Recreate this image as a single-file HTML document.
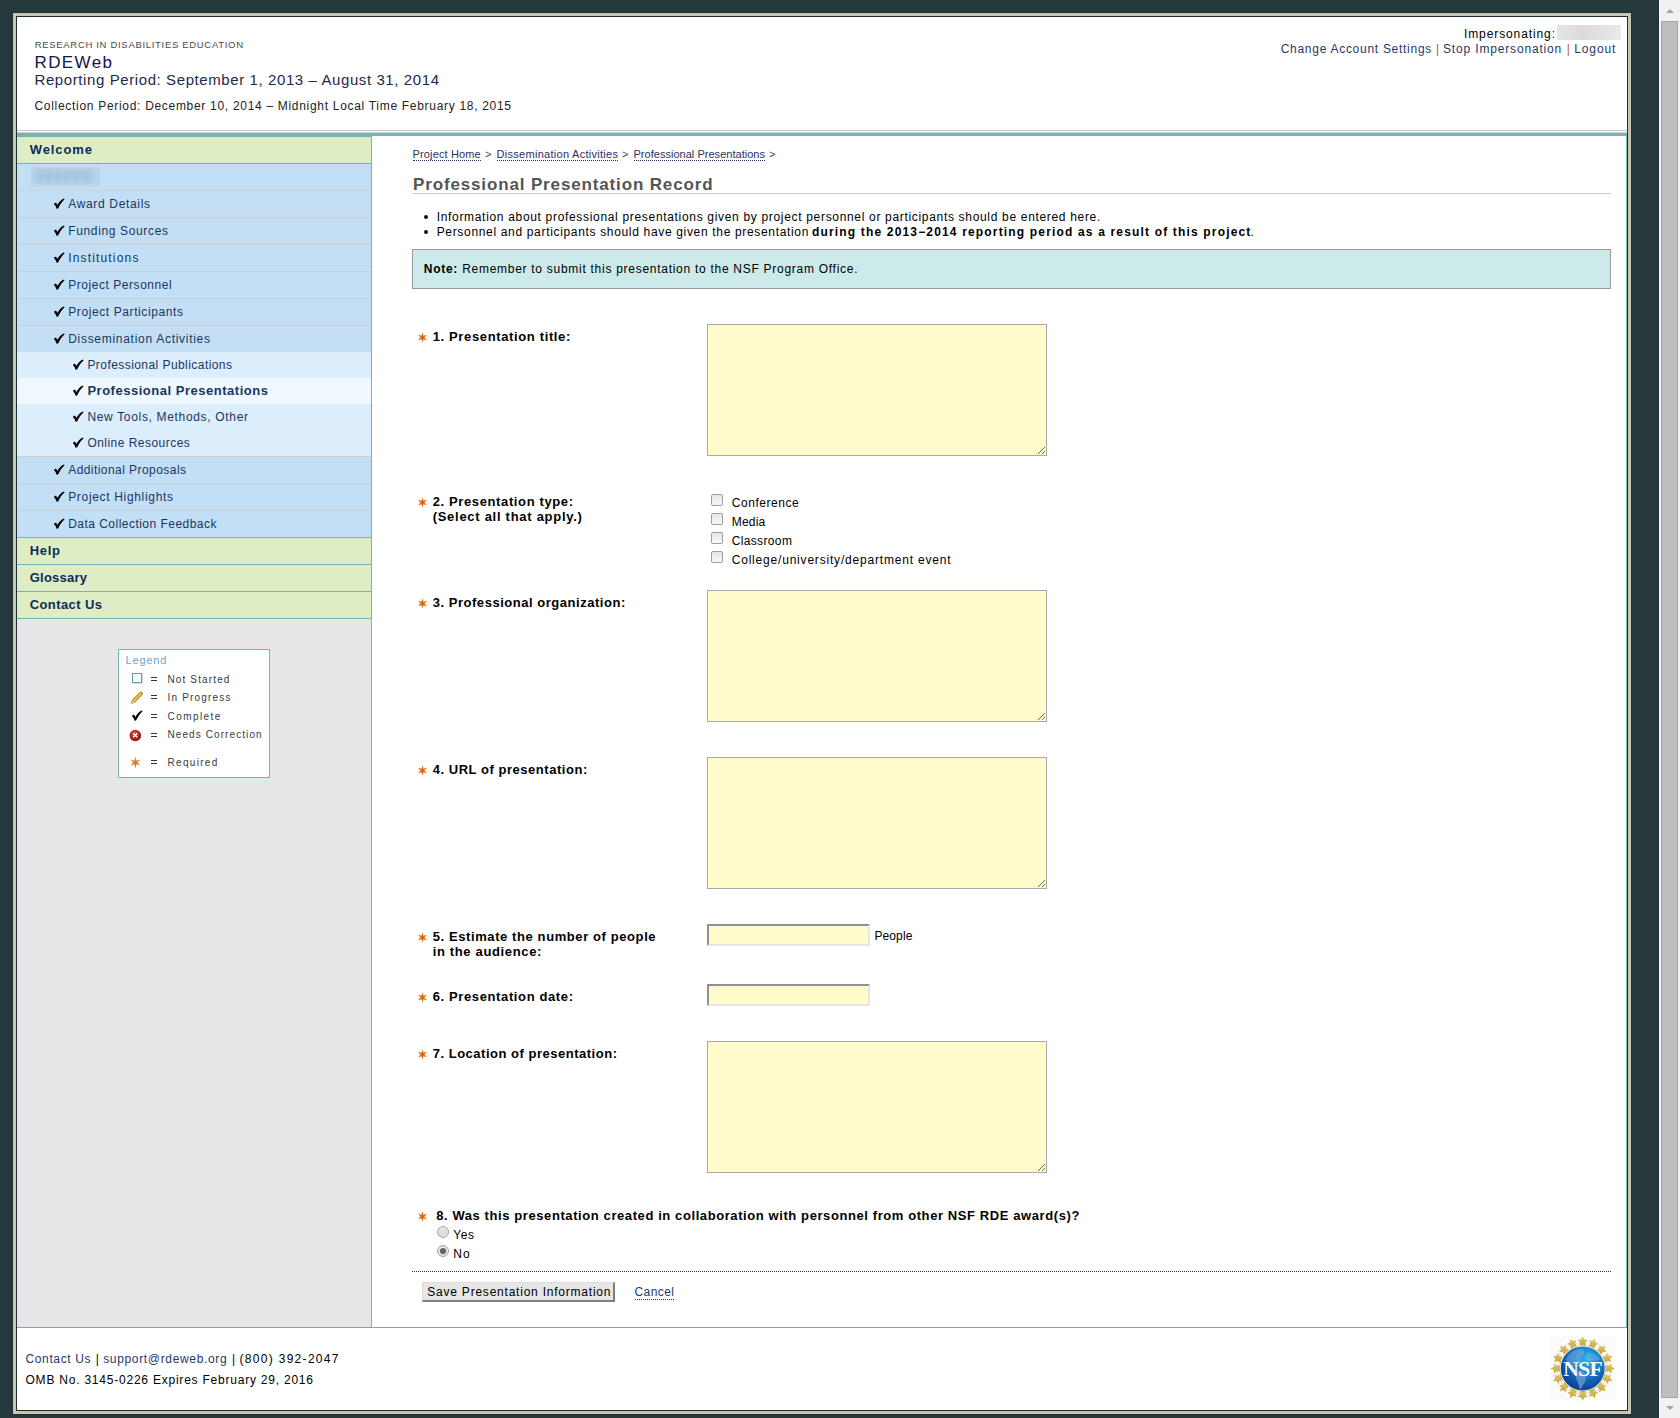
<!DOCTYPE html>
<html><head><meta charset="utf-8"><title>RDEWeb - Professional Presentation Record</title>
<style>
html,body{margin:0;padding:0}
body{width:1680px;height:1418px;overflow:hidden;position:relative;background:#25393d;font-family:"Liberation Sans",sans-serif}
.a{position:absolute}
.tx{position:absolute;white-space:nowrap;font-family:"Liberation Sans",sans-serif}
.tx b{font-weight:700}
.sep{color:#b4601e}
.bl{border-bottom:1px dotted #2e2e5e;}
#frame{position:absolute;left:13px;top:13px;width:1612px;height:1395px;border:3px solid #c8c5b0;box-shadow:0 0 0 1px #1f3235}
#inner{position:absolute;left:0;top:0;width:1610px;height:1393px;border:1px solid #1c2e32;background:#fff}
.row{position:absolute;left:17px;width:354px;height:26px}
.hb{background:#dfedc4}
.bb{background:#c2dff5}
.sb{background:#dcedfc}
.ab{background:#eef8fe}
.gl{position:absolute;left:17px;width:354px;height:1px;background:#cfcfcf}
.tl{position:absolute;left:17px;width:354px;height:1px;background:#78b3b4}
.ta{position:absolute;left:707px;width:338px;height:130px;border:1px solid #a9a9a9;background:#fffbcb}
.grip{position:absolute;right:1px;bottom:1px;width:9px;height:9px}
.inp{position:absolute;left:707px;width:159px;height:18px;border-style:solid;border-width:2px 2px 2px 2px;border-color:#909090 #e6e6e8 #e6e6e8 #909090;background:#fffbcb}
.cb{position:absolute;left:711px;width:10px;height:10px;border:1px solid #9d9d9d;border-radius:2px;background:linear-gradient(#e7e7e7,#f7f7f7)}
.rd{position:absolute;left:437px;width:10px;height:10px;border:1px solid #a5a5a5;border-radius:50%;background:linear-gradient(#e6e6e6,#dcdcdc)}
.star{position:absolute;left:417px;width:11px;height:11px}
.chk{position:absolute;width:11px;height:11px}
</style></head>
<body>
<!-- scrollbar -->
<div class="a" style="left:1658px;top:0;width:1px;height:1418px;background:#1b2b2f"></div>
<div class="a" style="left:1659px;top:0;width:21px;height:1418px;background:#f1f1f1;border-left:1px solid #fff;box-sizing:border-box"></div>
<div class="a" style="left:1661px;top:21px;width:15px;height:1375px;background:#bebebe;border:1px solid #a5a5a5"></div>
<svg class="a" style="left:1663.5px;top:7px" width="12" height="8"><path d="M2,6 L6,2 L10,6 Z" fill="#a3a3a3"/></svg>
<svg class="a" style="left:1664px;top:1404px" width="12" height="8"><path d="M2,2 L6,6 L10,2 Z" fill="#a3a3a3"/></svg>

<div id="frame"><div id="inner"></div></div>

<!-- header bottom lines -->
<div class="a" style="left:17px;top:130px;width:1610px;height:1px;background:#c9c9c9"></div>
<div class="a" style="left:17px;top:132px;width:1610px;height:1px;background:#d5d1d1"></div>
<div class="a" style="left:17px;top:133px;width:1610px;height:3px;background:#78b2b3"></div>
<!-- impersonating blur -->
<div class="a" style="left:1557px;top:25px;width:64px;height:15px;background:linear-gradient(90deg,#e6e4e4,#dcdada 40%,#e2e0e0 70%,#ebebeb);filter:blur(0.6px)"></div>

<!-- sidebar -->
<div class="a" style="left:17px;top:136px;width:354px;height:1191px;background:#e6e6e6"></div>
<div class="a" style="left:371px;top:136px;width:1px;height:1191px;background:#78b3b4"></div>
<div class="tl" style="top:136px"></div>
<div class="row hb" style="top:137px"></div>
<div class="tl" style="top:163px"></div>
<div class="row bb" style="top:164px"></div>
<div class="gl" style="top:190px"></div>
<div class="row bb" style="top:191px"></div>
<div class="gl" style="top:217px"></div>
<div class="row bb" style="top:218px"></div>
<div class="gl" style="top:244px"></div>
<div class="row bb" style="top:245px"></div>
<div class="gl" style="top:271px"></div>
<div class="row bb" style="top:272px"></div>
<div class="gl" style="top:298px"></div>
<div class="row bb" style="top:299px"></div>
<div class="gl" style="top:325px"></div>
<div class="row bb" style="top:326px"></div>
<div class="row sb" style="top:352px"></div>
<div class="row ab" style="top:378px"></div>
<div class="row sb" style="top:404px"></div>
<div class="row sb" style="top:430px"></div>
<div class="gl" style="top:456px"></div>
<div class="row bb" style="top:457px"></div>
<div class="gl" style="top:483px"></div>
<div class="row bb" style="top:484px"></div>
<div class="gl" style="top:510px"></div>
<div class="row bb" style="top:511px"></div>
<div class="tl" style="top:537px"></div>
<div class="row hb" style="top:538px"></div>
<div class="tl" style="top:564px"></div>
<div class="row hb" style="top:565px"></div>
<div class="tl" style="top:591px"></div>
<div class="row hb" style="top:592px"></div>
<div class="tl" style="top:618px"></div>
<!-- blurred project name -->
<div class="a" style="left:31px;top:167px;width:69px;height:19px;background:#b6d2ea;filter:blur(1px)"></div><div class="a" style="left:37px;top:170px;width:55px;height:12px;background:repeating-linear-gradient(90deg,#a8c6e0 0,#a8c6e0 6px,#aecbe4 6px,#aecbe4 9px);filter:blur(1.6px)"></div>
<svg class="a" style="left:53px;top:197.5px" width="12" height="11" viewBox="0 0 12 11"><path d="M0.9,6.1 C1.5,5.1 2.5,4.6 3.2,4.8 L4.3,6.9 C6.0,4.2 8.2,1.5 10.9,0.5 C11.5,0.6 11.6,1.4 11.2,1.8 C8.8,3.8 6.8,7.0 5.1,10.6 L3.6,10.8 C3.0,9.0 2.0,7.2 0.9,6.1 Z" fill="#000"/></svg>
<svg class="a" style="left:53px;top:224.5px" width="12" height="11" viewBox="0 0 12 11"><path d="M0.9,6.1 C1.5,5.1 2.5,4.6 3.2,4.8 L4.3,6.9 C6.0,4.2 8.2,1.5 10.9,0.5 C11.5,0.6 11.6,1.4 11.2,1.8 C8.8,3.8 6.8,7.0 5.1,10.6 L3.6,10.8 C3.0,9.0 2.0,7.2 0.9,6.1 Z" fill="#000"/></svg>
<svg class="a" style="left:53px;top:251.5px" width="12" height="11" viewBox="0 0 12 11"><path d="M0.9,6.1 C1.5,5.1 2.5,4.6 3.2,4.8 L4.3,6.9 C6.0,4.2 8.2,1.5 10.9,0.5 C11.5,0.6 11.6,1.4 11.2,1.8 C8.8,3.8 6.8,7.0 5.1,10.6 L3.6,10.8 C3.0,9.0 2.0,7.2 0.9,6.1 Z" fill="#000"/></svg>
<svg class="a" style="left:53px;top:278.5px" width="12" height="11" viewBox="0 0 12 11"><path d="M0.9,6.1 C1.5,5.1 2.5,4.6 3.2,4.8 L4.3,6.9 C6.0,4.2 8.2,1.5 10.9,0.5 C11.5,0.6 11.6,1.4 11.2,1.8 C8.8,3.8 6.8,7.0 5.1,10.6 L3.6,10.8 C3.0,9.0 2.0,7.2 0.9,6.1 Z" fill="#000"/></svg>
<svg class="a" style="left:53px;top:305.5px" width="12" height="11" viewBox="0 0 12 11"><path d="M0.9,6.1 C1.5,5.1 2.5,4.6 3.2,4.8 L4.3,6.9 C6.0,4.2 8.2,1.5 10.9,0.5 C11.5,0.6 11.6,1.4 11.2,1.8 C8.8,3.8 6.8,7.0 5.1,10.6 L3.6,10.8 C3.0,9.0 2.0,7.2 0.9,6.1 Z" fill="#000"/></svg>
<svg class="a" style="left:53px;top:332.5px" width="12" height="11" viewBox="0 0 12 11"><path d="M0.9,6.1 C1.5,5.1 2.5,4.6 3.2,4.8 L4.3,6.9 C6.0,4.2 8.2,1.5 10.9,0.5 C11.5,0.6 11.6,1.4 11.2,1.8 C8.8,3.8 6.8,7.0 5.1,10.6 L3.6,10.8 C3.0,9.0 2.0,7.2 0.9,6.1 Z" fill="#000"/></svg>
<svg class="a" style="left:53px;top:463.5px" width="12" height="11" viewBox="0 0 12 11"><path d="M0.9,6.1 C1.5,5.1 2.5,4.6 3.2,4.8 L4.3,6.9 C6.0,4.2 8.2,1.5 10.9,0.5 C11.5,0.6 11.6,1.4 11.2,1.8 C8.8,3.8 6.8,7.0 5.1,10.6 L3.6,10.8 C3.0,9.0 2.0,7.2 0.9,6.1 Z" fill="#000"/></svg>
<svg class="a" style="left:53px;top:490.5px" width="12" height="11" viewBox="0 0 12 11"><path d="M0.9,6.1 C1.5,5.1 2.5,4.6 3.2,4.8 L4.3,6.9 C6.0,4.2 8.2,1.5 10.9,0.5 C11.5,0.6 11.6,1.4 11.2,1.8 C8.8,3.8 6.8,7.0 5.1,10.6 L3.6,10.8 C3.0,9.0 2.0,7.2 0.9,6.1 Z" fill="#000"/></svg>
<svg class="a" style="left:53px;top:517.5px" width="12" height="11" viewBox="0 0 12 11"><path d="M0.9,6.1 C1.5,5.1 2.5,4.6 3.2,4.8 L4.3,6.9 C6.0,4.2 8.2,1.5 10.9,0.5 C11.5,0.6 11.6,1.4 11.2,1.8 C8.8,3.8 6.8,7.0 5.1,10.6 L3.6,10.8 C3.0,9.0 2.0,7.2 0.9,6.1 Z" fill="#000"/></svg>
<svg class="a" style="left:72px;top:358.5px" width="12" height="11" viewBox="0 0 12 11"><path d="M0.9,6.1 C1.5,5.1 2.5,4.6 3.2,4.8 L4.3,6.9 C6.0,4.2 8.2,1.5 10.9,0.5 C11.5,0.6 11.6,1.4 11.2,1.8 C8.8,3.8 6.8,7.0 5.1,10.6 L3.6,10.8 C3.0,9.0 2.0,7.2 0.9,6.1 Z" fill="#000"/></svg>
<svg class="a" style="left:72px;top:384.5px" width="12" height="11" viewBox="0 0 12 11"><path d="M0.9,6.1 C1.5,5.1 2.5,4.6 3.2,4.8 L4.3,6.9 C6.0,4.2 8.2,1.5 10.9,0.5 C11.5,0.6 11.6,1.4 11.2,1.8 C8.8,3.8 6.8,7.0 5.1,10.6 L3.6,10.8 C3.0,9.0 2.0,7.2 0.9,6.1 Z" fill="#000"/></svg>
<svg class="a" style="left:72px;top:410.5px" width="12" height="11" viewBox="0 0 12 11"><path d="M0.9,6.1 C1.5,5.1 2.5,4.6 3.2,4.8 L4.3,6.9 C6.0,4.2 8.2,1.5 10.9,0.5 C11.5,0.6 11.6,1.4 11.2,1.8 C8.8,3.8 6.8,7.0 5.1,10.6 L3.6,10.8 C3.0,9.0 2.0,7.2 0.9,6.1 Z" fill="#000"/></svg>
<svg class="a" style="left:72px;top:436.5px" width="12" height="11" viewBox="0 0 12 11"><path d="M0.9,6.1 C1.5,5.1 2.5,4.6 3.2,4.8 L4.3,6.9 C6.0,4.2 8.2,1.5 10.9,0.5 C11.5,0.6 11.6,1.4 11.2,1.8 C8.8,3.8 6.8,7.0 5.1,10.6 L3.6,10.8 C3.0,9.0 2.0,7.2 0.9,6.1 Z" fill="#000"/></svg>

<!-- legend -->
<div class="a" style="left:118px;top:649px;width:150px;height:127px;border:1px solid #7ab3b5;background:#fff"></div>
<div class="a" style="left:132px;top:673px;width:8px;height:8px;border:1px solid #5a9fb5;background:#fff;box-shadow:1px 1px 0 #d8d8d8"></div>
<svg class="a" style="left:129px;top:690px" width="15" height="15"><path d="M2.5,13.2 L3.4,10.2 L11.2,2.2 L13.3,4.3 L5.5,12.3 Z" fill="#f2c232" stroke="#8a5a10" stroke-width="0.9"/><path d="M11.2,2.2 L12.2,1.2 L14.2,3.2 L13.3,4.3 Z" fill="#e08a40"/><path d="M2.5,13.2 L3.4,10.2 L5.5,12.3 Z" fill="#e8d0a0"/></svg>
<svg class="a" style="left:131px;top:710px" width="12" height="11" viewBox="0 0 12 11"><path d="M0.9,6.1 C1.5,5.1 2.5,4.6 3.2,4.8 L4.3,6.9 C6.0,4.2 8.2,1.5 10.9,0.5 C11.5,0.6 11.6,1.4 11.2,1.8 C8.8,3.8 6.8,7.0 5.1,10.6 L3.6,10.8 C3.0,9.0 2.0,7.2 0.9,6.1 Z" fill="#000"/></svg>
<svg class="a" style="left:129px;top:729px" width="13" height="13"><defs><radialGradient id="rg" cx="0.4" cy="0.3" r="0.8"><stop offset="0" stop-color="#e04040"/><stop offset="1" stop-color="#8a0a0a"/></radialGradient></defs><circle cx="6.3" cy="6.5" r="5.8" fill="url(#rg)"/><path d="M4.2,4.3 L8.3,8.3 M8.3,4.3 L4.2,8.3" stroke="#fff" stroke-width="1.5"/></svg>
<svg class="a" style="left:130.0px;top:756.7px" width="11" height="11"><polygon points="5.50,-0.50 6.50,3.77 10.70,2.50 7.50,5.50 10.70,8.50 6.50,7.23 5.50,11.50 4.50,7.23 0.30,8.50 3.50,5.50 0.30,2.50 4.50,3.77" fill="#e07a22"/></svg>
<div class="a" style="left:151px;top:676.5px;width:6px;height:1px;background:#333"></div>
<div class="a" style="left:151px;top:679.5px;width:6px;height:1px;background:#333"></div>
<div class="a" style="left:151px;top:695.0px;width:6px;height:1px;background:#333"></div>
<div class="a" style="left:151px;top:698.0px;width:6px;height:1px;background:#333"></div>
<div class="a" style="left:151px;top:714.0px;width:6px;height:1px;background:#333"></div>
<div class="a" style="left:151px;top:717.0px;width:6px;height:1px;background:#333"></div>
<div class="a" style="left:151px;top:732.5px;width:6px;height:1px;background:#333"></div>
<div class="a" style="left:151px;top:735.5px;width:6px;height:1px;background:#333"></div>
<div class="a" style="left:151px;top:760.0px;width:6px;height:1px;background:#333"></div>
<div class="a" style="left:151px;top:763.0px;width:6px;height:1px;background:#333"></div>

<!-- content -->
<div class="a" style="left:1626px;top:136px;width:1px;height:1191px;background:#78b3b4"></div>
<div class="a" style="left:412px;top:193px;width:1199px;height:1px;background:#cccccc"></div>
<div class="a" style="left:424px;top:215px;width:4px;height:4px;border-radius:50%;background:#111"></div>
<div class="a" style="left:424px;top:230px;width:4px;height:4px;border-radius:50%;background:#111"></div>
<div class="a" style="left:412px;top:249px;width:1197px;height:38px;border:1px solid #9a9a9a;background:#cdeaea"></div>

<div class="ta" style="top:324px"></div>
<div class="ta" style="top:590px"></div>
<div class="ta" style="top:757px"></div>
<div class="ta" style="top:1041px"></div>
<div class="a" style="left:1038px;top:453px;width:1px;height:1px;background:#6a6a60"></div><div class="a" style="left:1039px;top:452px;width:1px;height:1px;background:#6a6a60"></div><div class="a" style="left:1040px;top:451px;width:1px;height:1px;background:#6a6a60"></div><div class="a" style="left:1041px;top:450px;width:1px;height:1px;background:#6a6a60"></div><div class="a" style="left:1042px;top:449px;width:1px;height:1px;background:#6a6a60"></div><div class="a" style="left:1043px;top:448px;width:1px;height:1px;background:#6a6a60"></div><div class="a" style="left:1044px;top:447px;width:1px;height:1px;background:#6a6a60"></div><div class="a" style="left:1042px;top:453px;width:1px;height:1px;background:#6a6a60"></div><div class="a" style="left:1043px;top:452px;width:1px;height:1px;background:#6a6a60"></div><div class="a" style="left:1044px;top:451px;width:1px;height:1px;background:#6a6a60"></div>
<div class="a" style="left:1038px;top:719px;width:1px;height:1px;background:#6a6a60"></div><div class="a" style="left:1039px;top:718px;width:1px;height:1px;background:#6a6a60"></div><div class="a" style="left:1040px;top:717px;width:1px;height:1px;background:#6a6a60"></div><div class="a" style="left:1041px;top:716px;width:1px;height:1px;background:#6a6a60"></div><div class="a" style="left:1042px;top:715px;width:1px;height:1px;background:#6a6a60"></div><div class="a" style="left:1043px;top:714px;width:1px;height:1px;background:#6a6a60"></div><div class="a" style="left:1044px;top:713px;width:1px;height:1px;background:#6a6a60"></div><div class="a" style="left:1042px;top:719px;width:1px;height:1px;background:#6a6a60"></div><div class="a" style="left:1043px;top:718px;width:1px;height:1px;background:#6a6a60"></div><div class="a" style="left:1044px;top:717px;width:1px;height:1px;background:#6a6a60"></div>
<div class="a" style="left:1038px;top:886px;width:1px;height:1px;background:#6a6a60"></div><div class="a" style="left:1039px;top:885px;width:1px;height:1px;background:#6a6a60"></div><div class="a" style="left:1040px;top:884px;width:1px;height:1px;background:#6a6a60"></div><div class="a" style="left:1041px;top:883px;width:1px;height:1px;background:#6a6a60"></div><div class="a" style="left:1042px;top:882px;width:1px;height:1px;background:#6a6a60"></div><div class="a" style="left:1043px;top:881px;width:1px;height:1px;background:#6a6a60"></div><div class="a" style="left:1044px;top:880px;width:1px;height:1px;background:#6a6a60"></div><div class="a" style="left:1042px;top:886px;width:1px;height:1px;background:#6a6a60"></div><div class="a" style="left:1043px;top:885px;width:1px;height:1px;background:#6a6a60"></div><div class="a" style="left:1044px;top:884px;width:1px;height:1px;background:#6a6a60"></div>
<div class="a" style="left:1038px;top:1170px;width:1px;height:1px;background:#6a6a60"></div><div class="a" style="left:1039px;top:1169px;width:1px;height:1px;background:#6a6a60"></div><div class="a" style="left:1040px;top:1168px;width:1px;height:1px;background:#6a6a60"></div><div class="a" style="left:1041px;top:1167px;width:1px;height:1px;background:#6a6a60"></div><div class="a" style="left:1042px;top:1166px;width:1px;height:1px;background:#6a6a60"></div><div class="a" style="left:1043px;top:1165px;width:1px;height:1px;background:#6a6a60"></div><div class="a" style="left:1044px;top:1164px;width:1px;height:1px;background:#6a6a60"></div><div class="a" style="left:1042px;top:1170px;width:1px;height:1px;background:#6a6a60"></div><div class="a" style="left:1043px;top:1169px;width:1px;height:1px;background:#6a6a60"></div><div class="a" style="left:1044px;top:1168px;width:1px;height:1px;background:#6a6a60"></div>
<div class="inp" style="top:924px"></div>
<div class="inp" style="top:984px"></div>
<div class="cb" style="top:494px"></div>
<div class="cb" style="top:513px"></div>
<div class="cb" style="top:532px"></div>
<div class="cb" style="top:551px"></div>
<div class="rd" style="top:1226px"></div>
<div class="rd" style="top:1245px"><div style="position:absolute;left:2px;top:2px;width:6px;height:6px;border-radius:50%;background:#606060"></div></div>
<svg class="a" style="left:417.0px;top:331.6px" width="11" height="11"><polygon points="5.50,0.20 6.45,3.85 10.09,2.85 7.40,5.50 10.09,8.15 6.45,7.15 5.50,10.80 4.55,7.15 0.91,8.15 3.60,5.50 0.91,2.85 4.55,3.85" fill="#d96a12"/></svg>
<svg class="a" style="left:417.0px;top:497.1px" width="11" height="11"><polygon points="5.50,0.20 6.45,3.85 10.09,2.85 7.40,5.50 10.09,8.15 6.45,7.15 5.50,10.80 4.55,7.15 0.91,8.15 3.60,5.50 0.91,2.85 4.55,3.85" fill="#d96a12"/></svg>
<svg class="a" style="left:417.0px;top:597.9px" width="11" height="11"><polygon points="5.50,0.20 6.45,3.85 10.09,2.85 7.40,5.50 10.09,8.15 6.45,7.15 5.50,10.80 4.55,7.15 0.91,8.15 3.60,5.50 0.91,2.85 4.55,3.85" fill="#d96a12"/></svg>
<svg class="a" style="left:417.0px;top:764.8px" width="11" height="11"><polygon points="5.50,0.20 6.45,3.85 10.09,2.85 7.40,5.50 10.09,8.15 6.45,7.15 5.50,10.80 4.55,7.15 0.91,8.15 3.60,5.50 0.91,2.85 4.55,3.85" fill="#d96a12"/></svg>
<svg class="a" style="left:417.0px;top:932.1px" width="11" height="11"><polygon points="5.50,0.20 6.45,3.85 10.09,2.85 7.40,5.50 10.09,8.15 6.45,7.15 5.50,10.80 4.55,7.15 0.91,8.15 3.60,5.50 0.91,2.85 4.55,3.85" fill="#d96a12"/></svg>
<svg class="a" style="left:417.0px;top:991.8px" width="11" height="11"><polygon points="5.50,0.20 6.45,3.85 10.09,2.85 7.40,5.50 10.09,8.15 6.45,7.15 5.50,10.80 4.55,7.15 0.91,8.15 3.60,5.50 0.91,2.85 4.55,3.85" fill="#d96a12"/></svg>
<svg class="a" style="left:417.0px;top:1048.9px" width="11" height="11"><polygon points="5.50,0.20 6.45,3.85 10.09,2.85 7.40,5.50 10.09,8.15 6.45,7.15 5.50,10.80 4.55,7.15 0.91,8.15 3.60,5.50 0.91,2.85 4.55,3.85" fill="#d96a12"/></svg>
<svg class="a" style="left:417.0px;top:1211.0px" width="11" height="11"><polygon points="5.50,0.20 6.45,3.85 10.09,2.85 7.40,5.50 10.09,8.15 6.45,7.15 5.50,10.80 4.55,7.15 0.91,8.15 3.60,5.50 0.91,2.85 4.55,3.85" fill="#d96a12"/></svg>
<div class="a" style="left:412px;top:1271px;width:1199px;height:0;border-top:1px dotted #333"></div>
<div class="a" style="left:422px;top:1282px;width:190px;height:17px;background:#e6e6e6;border-style:solid;border-width:1px 2px 2px 1px;border-color:#dcdcdc #7f7f7f #7f7f7f #dcdcdc"></div>

<!-- footer -->
<div class="a" style="left:17px;top:1327px;width:1610px;height:1px;background:#9a9a9a"></div>
<svg class="a" style="left:1550px;top:1336px" width="65" height="65"><defs><radialGradient id="gl" cx="0.6" cy="0.3" r="0.8"><stop offset="0" stop-color="#28b8ec"/><stop offset="0.4" stop-color="#1a7cc8"/><stop offset="0.8" stop-color="#0d4a9c"/><stop offset="1" stop-color="#0a3a88"/></radialGradient><linearGradient id="gd" x1="0" y1="0" x2="0" y2="1"><stop offset="0" stop-color="#dcc886"/><stop offset="1" stop-color="#c9a32a"/></linearGradient></defs><rect x="0" y="0" width="65" height="65" fill="#fbfbf7"/><circle cx="32.7" cy="32.4" r="24.2" fill="none" stroke="url(#gd)" stroke-width="3"/><polygon points="32.70,0.20 34.29,3.42 37.84,3.93 35.27,6.43 35.87,9.97 32.70,8.30 29.53,9.97 30.13,6.43 27.56,3.93 31.11,3.42" fill="url(#gd)"/><polygon points="45.02,2.65 45.26,6.23 48.34,8.06 45.01,9.39 44.22,12.89 41.92,10.13 38.35,10.46 40.26,7.43 38.85,4.13 42.33,5.01" fill="url(#gd)"/><polygon points="55.47,9.63 54.32,13.03 56.46,15.90 52.88,15.86 50.81,18.78 49.74,15.36 46.32,14.29 49.24,12.22 49.20,8.64 52.07,10.78" fill="url(#gd)"/><polygon points="62.45,20.08 60.09,22.77 60.97,26.25 57.67,24.84 54.64,26.75 54.97,23.18 52.21,20.88 55.71,20.09 57.04,16.76 58.87,19.84" fill="url(#gd)"/><polygon points="64.90,32.40 61.68,33.99 61.17,37.54 58.67,34.97 55.13,35.57 56.80,32.40 55.13,29.23 58.67,29.83 61.17,27.26 61.68,30.81" fill="url(#gd)"/><polygon points="62.45,44.72 58.87,44.96 57.04,48.04 55.71,44.71 52.21,43.92 54.97,41.62 54.64,38.05 57.67,39.96 60.97,38.55 60.09,42.03" fill="url(#gd)"/><polygon points="55.47,55.17 52.07,54.02 49.20,56.16 49.24,52.58 46.32,50.51 49.74,49.44 50.81,46.02 52.88,48.94 56.46,48.90 54.32,51.77" fill="url(#gd)"/><polygon points="45.02,62.15 42.33,59.79 38.85,60.67 40.26,57.37 38.35,54.34 41.92,54.67 44.22,51.91 45.01,55.41 48.34,56.74 45.26,58.57" fill="url(#gd)"/><polygon points="32.70,64.60 31.11,61.38 27.56,60.87 30.13,58.37 29.53,54.83 32.70,56.50 35.87,54.83 35.27,58.37 37.84,60.87 34.29,61.38" fill="url(#gd)"/><polygon points="20.38,62.15 20.14,58.57 17.06,56.74 20.39,55.41 21.18,51.91 23.48,54.67 27.05,54.34 25.14,57.37 26.55,60.67 23.07,59.79" fill="url(#gd)"/><polygon points="9.93,55.17 11.08,51.77 8.94,48.90 12.52,48.94 14.59,46.02 15.66,49.44 19.08,50.51 16.16,52.58 16.20,56.16 13.33,54.02" fill="url(#gd)"/><polygon points="2.95,44.72 5.31,42.03 4.43,38.55 7.73,39.96 10.76,38.05 10.43,41.62 13.19,43.92 9.69,44.71 8.36,48.04 6.53,44.96" fill="url(#gd)"/><polygon points="0.50,32.40 3.72,30.81 4.23,27.26 6.73,29.83 10.27,29.23 8.60,32.40 10.27,35.57 6.73,34.97 4.23,37.54 3.72,33.99" fill="url(#gd)"/><polygon points="2.95,20.08 6.53,19.84 8.36,16.76 9.69,20.09 13.19,20.88 10.43,23.18 10.76,26.75 7.73,24.84 4.43,26.25 5.31,22.77" fill="url(#gd)"/><polygon points="9.93,9.63 13.33,10.78 16.20,8.64 16.16,12.22 19.08,14.29 15.66,15.36 14.59,18.78 12.52,15.86 8.94,15.90 11.08,13.03" fill="url(#gd)"/><polygon points="20.38,2.65 23.07,5.01 26.55,4.13 25.14,7.43 27.05,10.46 23.48,10.13 21.18,12.89 20.39,9.39 17.06,8.06 20.14,6.23" fill="url(#gd)"/><ellipse cx="37.44" cy="8.57" rx="1.9" ry="1.3" transform="rotate(11.2 37.44 8.57)" fill="#fff"/><ellipse cx="46.20" cy="12.20" rx="1.9" ry="1.3" transform="rotate(33.8 46.20 12.20)" fill="#fff"/><ellipse cx="52.90" cy="18.90" rx="1.9" ry="1.3" transform="rotate(56.2 52.90 18.90)" fill="#fff"/><ellipse cx="56.53" cy="27.66" rx="1.9" ry="1.3" transform="rotate(78.8 56.53 27.66)" fill="#fff"/><ellipse cx="56.53" cy="37.14" rx="1.9" ry="1.3" transform="rotate(101.2 56.53 37.14)" fill="#fff"/><ellipse cx="52.90" cy="45.90" rx="1.9" ry="1.3" transform="rotate(123.8 52.90 45.90)" fill="#fff"/><ellipse cx="46.20" cy="52.60" rx="1.9" ry="1.3" transform="rotate(146.2 46.20 52.60)" fill="#fff"/><ellipse cx="37.44" cy="56.23" rx="1.9" ry="1.3" transform="rotate(168.8 37.44 56.23)" fill="#fff"/><ellipse cx="27.96" cy="56.23" rx="1.9" ry="1.3" transform="rotate(191.2 27.96 56.23)" fill="#fff"/><ellipse cx="19.20" cy="52.60" rx="1.9" ry="1.3" transform="rotate(213.8 19.20 52.60)" fill="#fff"/><ellipse cx="12.50" cy="45.90" rx="1.9" ry="1.3" transform="rotate(236.2 12.50 45.90)" fill="#fff"/><ellipse cx="8.87" cy="37.14" rx="1.9" ry="1.3" transform="rotate(258.8 8.87 37.14)" fill="#fff"/><ellipse cx="8.87" cy="27.66" rx="1.9" ry="1.3" transform="rotate(281.2 8.87 27.66)" fill="#fff"/><ellipse cx="12.50" cy="18.90" rx="1.9" ry="1.3" transform="rotate(303.8 12.50 18.90)" fill="#fff"/><ellipse cx="19.20" cy="12.20" rx="1.9" ry="1.3" transform="rotate(326.2 19.20 12.20)" fill="#fff"/><ellipse cx="27.96" cy="8.57" rx="1.9" ry="1.3" transform="rotate(348.8 27.96 8.57)" fill="#fff"/><circle cx="32.7" cy="32.4" r="22" fill="url(#gl)"/><path d="M15.700000000000003,23.4 q4,-9 14,-11 q6,1 4,6 q-4,2 -3,6 q3,3 -2,6 q-5,-1 -7,2 q-3,-3 -6,-9 z" fill="#8ab4e4" opacity="0.45"/><path d="M36.7,16.4 q8,0 14,6 q-3,3 -7,2 q-5,2 -8,-2 z" fill="#8ab4e4" opacity="0.4"/><path d="M26.700000000000003,35.4 q6,-2 9,3 q1,6 -3,11 q-2,4 -3,4 q-1,-6 -3,-10 q-2,-4 0,-8 z" fill="#9aaee0" opacity="0.55"/><text x="32.7" y="39.8" text-anchor="middle" font-family="Liberation Serif" font-weight="700" font-size="21.5" fill="#fff" letter-spacing="-0.5">NSF</text></svg>

<div class="tx" id="h1" style="left:34.7px;top:40px;font-size:9.5px;line-height:9.5px;font-weight:400;color:#4a4a4a;letter-spacing:0.687px;">RESEARCH IN DISABILITIES EDUCATION</div>
<div class="tx" id="h2" style="left:34.5px;top:54px;font-size:17px;line-height:17px;font-weight:400;color:#14144a;letter-spacing:1.391px;">RDEWeb</div>
<div class="tx" id="h3" style="left:34.5px;top:72px;font-size:15px;line-height:15px;font-weight:400;color:#1e2a4a;letter-spacing:0.594px;">Reporting Period: September 1, 2013 &ndash; August 31, 2014</div>
<div class="tx" id="h4" style="left:34.5px;top:100px;font-size:12px;line-height:12px;font-weight:400;color:#222;letter-spacing:0.697px;">Collection Period: December 10, 2014 &ndash; Midnight Local Time February 18, 2015</div>
<div class="tx" id="imp" style="left:1464.0px;top:28px;font-size:12px;line-height:12px;font-weight:400;color:#000;letter-spacing:0.893px;">Impersonating:</div>
<div class="tx" id="acct0" style="left:1280.7px;top:43px;font-size:12px;line-height:12px;font-weight:400;color:#1f3a68;letter-spacing:0.720px;">Change Account Settings</div>
<div class="tx" id="acct1" style="left:1436.0px;top:43px;font-size:12px;line-height:12px;font-weight:400;color:#b4601e;letter-spacing:-0.525px;">|</div>
<div class="tx" id="acct2" style="left:1443.0px;top:43px;font-size:12px;line-height:12px;font-weight:400;color:#1f3a68;letter-spacing:0.837px;">Stop Impersonation</div>
<div class="tx" id="acct3" style="left:1566.8px;top:43px;font-size:12px;line-height:12px;font-weight:400;color:#b4601e;letter-spacing:-0.625px;">|</div>
<div class="tx" id="acct4" style="left:1574.3px;top:43px;font-size:12px;line-height:12px;font-weight:400;color:#1f3a68;letter-spacing:0.859px;">Logout</div>
<div class="tx" id="s_welcome" style="left:29.7px;top:143px;font-size:13px;line-height:13px;font-weight:700;color:#0d2b57;letter-spacing:0.909px;">Welcome</div>
<div class="tx" id="s_i0" style="left:68.2px;top:198px;font-size:12px;line-height:12px;font-weight:400;color:#1b3560;letter-spacing:0.666px;">Award Details</div>
<div class="tx" id="s_i1" style="left:68.2px;top:225px;font-size:12px;line-height:12px;font-weight:400;color:#1b3560;letter-spacing:0.648px;">Funding Sources</div>
<div class="tx" id="s_i2" style="left:68.2px;top:252px;font-size:12px;line-height:12px;font-weight:400;color:#1b3560;letter-spacing:1.166px;">Institutions</div>
<div class="tx" id="s_i3" style="left:68.2px;top:279px;font-size:12px;line-height:12px;font-weight:400;color:#1b3560;letter-spacing:0.549px;">Project Personnel</div>
<div class="tx" id="s_i4" style="left:68.2px;top:306px;font-size:12px;line-height:12px;font-weight:400;color:#1b3560;letter-spacing:0.600px;">Project Participants</div>
<div class="tx" id="s_i5" style="left:68.2px;top:333px;font-size:12px;line-height:12px;font-weight:400;color:#1b3560;letter-spacing:0.713px;">Dissemination Activities</div>
<div class="tx" id="s_s0" style="left:87.4px;top:359px;font-size:12px;line-height:12px;font-weight:400;color:#1b3560;letter-spacing:0.438px;">Professional Publications</div>
<div class="tx" id="s_s1" style="left:87.4px;top:384px;font-size:13px;line-height:13px;font-weight:700;color:#1b3560;letter-spacing:0.519px;">Professional Presentations</div>
<div class="tx" id="s_s2" style="left:87.4px;top:411px;font-size:12px;line-height:12px;font-weight:400;color:#1b3560;letter-spacing:0.670px;">New Tools, Methods, Other</div>
<div class="tx" id="s_s3" style="left:87.4px;top:437px;font-size:12px;line-height:12px;font-weight:400;color:#1b3560;letter-spacing:0.467px;">Online Resources</div>
<div class="tx" id="s_j0" style="left:68.2px;top:464px;font-size:12px;line-height:12px;font-weight:400;color:#1b3560;letter-spacing:0.442px;">Additional Proposals</div>
<div class="tx" id="s_j1" style="left:68.2px;top:491px;font-size:12px;line-height:12px;font-weight:400;color:#1b3560;letter-spacing:0.672px;">Project Highlights</div>
<div class="tx" id="s_j2" style="left:68.2px;top:518px;font-size:12px;line-height:12px;font-weight:400;color:#1b3560;letter-spacing:0.473px;">Data Collection Feedback</div>
<div class="tx" id="s_k0" style="left:29.7px;top:544px;font-size:13px;line-height:13px;font-weight:700;color:#0d2b57;letter-spacing:0.709px;">Help</div>
<div class="tx" id="s_k1" style="left:29.7px;top:571px;font-size:13px;line-height:13px;font-weight:700;color:#0d2b57;letter-spacing:0.235px;">Glossary</div>
<div class="tx" id="s_k2" style="left:29.7px;top:598px;font-size:13px;line-height:13px;font-weight:700;color:#0d2b57;letter-spacing:0.408px;">Contact Us</div>
<div class="tx" id="bc0" style="left:412.5px;top:149px;font-size:11px;line-height:11px;font-weight:400;color:#2e2e5e;letter-spacing:0.142px;"><span class="bl">Project Home</span></div>
<div class="tx" id="bc1" style="left:485.0px;top:149px;font-size:11px;line-height:11px;font-weight:400;color:#444;letter-spacing:0.562px;">&gt;</div>
<div class="tx" id="bc2" style="left:496.6px;top:149px;font-size:11px;line-height:11px;font-weight:400;color:#2e2e5e;letter-spacing:0.281px;"><span class="bl">Dissemination Activities</span></div>
<div class="tx" id="bc3" style="left:622.0px;top:149px;font-size:11px;line-height:11px;font-weight:400;color:#444;letter-spacing:0.562px;">&gt;</div>
<div class="tx" id="bc4" style="left:633.5px;top:149px;font-size:11px;line-height:11px;font-weight:400;color:#2e2e5e;letter-spacing:0.026px;"><span class="bl">Professional Presentations</span></div>
<div class="tx" id="bc5" style="left:769.0px;top:149px;font-size:11px;line-height:11px;font-weight:400;color:#444;letter-spacing:0.562px;">&gt;</div>
<div class="tx" id="title" style="left:413.0px;top:176px;font-size:17px;line-height:17px;font-weight:700;color:#555;letter-spacing:0.857px;">Professional Presentation Record</div>
<div class="tx" id="b1" style="left:436.7px;top:211px;font-size:12px;line-height:12px;font-weight:400;color:#000;letter-spacing:0.678px;">Information about professional presentations given by project personnel or participants should be entered here.</div>
<div class="tx" id="b2a" style="left:436.7px;top:226px;font-size:12px;line-height:12px;font-weight:400;color:#000;letter-spacing:0.669px;">Personnel and participants should have given the presentation</div>
<div class="tx" id="b2b" style="left:812.0px;top:226px;font-size:12px;line-height:12px;font-weight:700;color:#000;letter-spacing:1.165px;">during the 2013&minus;2014 reporting period as a result of this project</div>
<div class="tx" id="b2c" style="left:1250.5px;top:226px;font-size:12px;line-height:12px;font-weight:400;color:#000;letter-spacing:0.156px;">.</div>
<div class="tx" id="note" style="left:423.8px;top:263px;font-size:12px;line-height:12px;font-weight:400;color:#000;letter-spacing:0.722px;"><b>Note:</b> Remember to submit this presentation to the NSF Program Office.</div>
<div class="tx" id="l0" style="left:432.7px;top:330px;font-size:13px;line-height:13px;font-weight:700;color:#000;letter-spacing:0.636px;">1. Presentation title:</div>
<div class="tx" id="l1" style="left:432.7px;top:495px;font-size:13px;line-height:13px;font-weight:700;color:#000;letter-spacing:0.621px;">2. Presentation type:</div>
<div class="tx" id="l2" style="left:432.7px;top:510px;font-size:13px;line-height:13px;font-weight:700;color:#000;letter-spacing:0.718px;">(Select all that apply.)</div>
<div class="tx" id="l3" style="left:432.7px;top:596px;font-size:13px;line-height:13px;font-weight:700;color:#000;letter-spacing:0.532px;">3. Professional organization:</div>
<div class="tx" id="l4" style="left:432.7px;top:763px;font-size:13px;line-height:13px;font-weight:700;color:#000;letter-spacing:0.535px;">4. URL of presentation:</div>
<div class="tx" id="l5" style="left:432.7px;top:930px;font-size:13px;line-height:13px;font-weight:700;color:#000;letter-spacing:0.596px;">5. Estimate the number of people</div>
<div class="tx" id="l6" style="left:432.7px;top:945px;font-size:13px;line-height:13px;font-weight:700;color:#000;letter-spacing:0.649px;">in the audience:</div>
<div class="tx" id="l7" style="left:432.7px;top:990px;font-size:13px;line-height:13px;font-weight:700;color:#000;letter-spacing:0.621px;">6. Presentation date:</div>
<div class="tx" id="l8" style="left:432.7px;top:1047px;font-size:13px;line-height:13px;font-weight:700;color:#000;letter-spacing:0.512px;">7. Location of presentation:</div>
<div class="tx" id="q8" style="left:436.2px;top:1209px;font-size:13px;line-height:13px;font-weight:700;color:#000;letter-spacing:0.589px;">8. Was this presentation created in collaboration with personnel from other NSF RDE award(s)?</div>
<div class="tx" id="people" style="left:874.4px;top:930px;font-size:12px;line-height:12px;font-weight:400;color:#000;letter-spacing:0.125px;">People</div>
<div class="tx" id="cb0" style="left:731.7px;top:497px;font-size:12px;line-height:12px;font-weight:400;color:#000;letter-spacing:0.561px;">Conference</div>
<div class="tx" id="cb1" style="left:731.7px;top:516px;font-size:12px;line-height:12px;font-weight:400;color:#000;letter-spacing:0.203px;">Media</div>
<div class="tx" id="cb2" style="left:731.7px;top:535px;font-size:12px;line-height:12px;font-weight:400;color:#000;letter-spacing:0.355px;">Classroom</div>
<div class="tx" id="cb3" style="left:731.7px;top:554px;font-size:12px;line-height:12px;font-weight:400;color:#000;letter-spacing:0.805px;">College/university/department event</div>
<div class="tx" id="yes" style="left:453.2px;top:1229px;font-size:12px;line-height:12px;font-weight:400;color:#000;letter-spacing:0.561px;">Yes</div>
<div class="tx" id="no" style="left:453.2px;top:1248px;font-size:12px;line-height:12px;font-weight:400;color:#000;letter-spacing:1.206px;">No</div>
<div class="tx" id="btn" style="left:427.3px;top:1286px;font-size:12px;line-height:12px;font-weight:400;color:#000;letter-spacing:0.777px;">Save Presentation Information</div>
<div class="tx" id="cancel" style="left:634.5px;top:1286px;font-size:12px;line-height:12px;font-weight:400;color:#1f3a68;letter-spacing:0.408px;"><span class="bl">Cancel</span></div>
<div class="tx" id="f1a" style="left:25.5px;top:1353px;font-size:12px;line-height:12px;font-weight:400;color:#1f3a68;letter-spacing:0.627px;">Contact Us</div>
<div class="tx" id="f1b" style="left:95.8px;top:1353px;font-size:12px;line-height:12px;font-weight:400;color:#000;letter-spacing:-0.375px;">|</div>
<div class="tx" id="f1c" style="left:103.2px;top:1353px;font-size:12px;line-height:12px;font-weight:400;color:#1f3a68;letter-spacing:0.662px;">support@rdeweb.org</div>
<div class="tx" id="f1d" style="left:232.0px;top:1353px;font-size:12px;line-height:12px;font-weight:400;color:#000;letter-spacing:-0.375px;">|</div>
<div class="tx" id="f1e" style="left:239.5px;top:1353px;font-size:12px;line-height:12px;font-weight:400;color:#000;letter-spacing:1.303px;">(800) 392-2047</div>
<div class="tx" id="f2" style="left:25.5px;top:1374px;font-size:12px;line-height:12px;font-weight:400;color:#000;letter-spacing:0.778px;">OMB No. 3145-0226 Expires February 29, 2016</div>
<div class="tx" id="lg0" style="left:167.5px;top:675px;font-size:10px;line-height:10px;font-weight:400;color:#3a3a3a;letter-spacing:1.131px;">Not Started</div>
<div class="tx" id="lg1" style="left:167.5px;top:693px;font-size:10px;line-height:10px;font-weight:400;color:#3a3a3a;letter-spacing:1.186px;">In Progress</div>
<div class="tx" id="lg2" style="left:167.5px;top:712px;font-size:10px;line-height:10px;font-weight:400;color:#3a3a3a;letter-spacing:1.427px;">Complete</div>
<div class="tx" id="lg3" style="left:167.5px;top:730px;font-size:10px;line-height:10px;font-weight:400;color:#3a3a3a;letter-spacing:1.086px;">Needs Correction</div>
<div class="tx" id="lg4" style="left:167.5px;top:758px;font-size:10px;line-height:10px;font-weight:400;color:#3a3a3a;letter-spacing:1.315px;">Required</div>
<div class="tx" id="lgt" style="left:125.5px;top:655px;font-size:11px;line-height:11px;font-weight:400;color:#6aa3cc;letter-spacing:0.836px;">Legend</div>
</body></html>
